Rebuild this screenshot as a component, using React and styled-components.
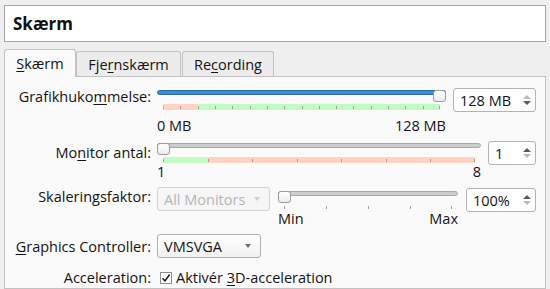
import React from "react";
import styled, { createGlobalStyle } from "styled-components";

const GlobalStyle = createGlobalStyle`
  html, body {
    margin: 0;
    padding: 0;
    background: #efefef;
  }
  body {
    font-family: "Open Sans", "Noto Sans", sans-serif;
    font-size: 14.5px;
    color: #141414;
  }
`;

const Window = styled.div`
  width: 550px;
  height: 289px;
  box-sizing: border-box;
  overflow: hidden;
  padding: 5px 4px 0 4px;
  display: flex;
  flex-direction: column;
  background: #efefef;
`;

const TitleBox = styled.div`
  height: 37px;
  box-sizing: border-box;
  border: 1px solid #a6a6a6;
  background: #ffffff;
  display: flex;
  align-items: center;
  padding-left: 8px;
  font-size: 17px;
  font-weight: 700;
  color: #111;
`;

const TabBar = styled.div`
  margin-top: 7px;
  height: 27px;
  display: flex;
  align-items: flex-end;
  position: relative;
  z-index: 1;
`;

const Tab = styled.div`
  width: ${(p) => p.$w}px;
  height: ${(p) => (p.$active ? 28 : 25)}px;
  margin-bottom: ${(p) => (p.$active ? -1 : 0)}px;
  margin-right: ${(p) => (p.$active ? 0 : 1)}px;
  box-sizing: border-box;
  border: 1px solid #c2c2c2;
  border-bottom: none;
  border-radius: 3px 3px 0 0;
  background: ${(p) => (p.$active ? "#fafafa" : "#ececec")};
  display: flex;
  align-items: center;
  justify-content: center;
  line-height: 17px;
  white-space: nowrap;
`;

const Mn = styled.span`
  text-decoration: underline;
  text-underline-offset: 2px;
  text-decoration-thickness: 1px;
`;

const Panel = styled.div`
  flex: 1;
  border: 1px solid #c2c2c2;
  background: #fafafa;
  padding: 9px 9px 0 10px;
`;

const Row = styled.div`
  display: grid;
  grid-template-columns: 136px 1fr;
  column-gap: 6px;
  margin-top: ${(p) => p.$top || 0}px;
`;

const Label = styled.div`
  text-align: right;
  white-space: nowrap;
  line-height: 17px;
  padding-top: ${(p) => p.$pad || 0}px;
`;

const Content = styled.div`
  display: flex;
  align-items: flex-start;
  gap: ${(p) => p.$gap || 7}px;
`;

const SliderBlock = styled.div`
  flex: 1;
  min-width: 0;
`;

const Track = styled.div`
  position: relative;
  height: 13px;
`;

const Groove = styled.div`
  margin-top: 4px;
  height: 5px;
  box-sizing: border-box;
  border: 1px solid ${(p) => (p.$blue ? "#2b67a6" : "#a9a9a9")};
  border-radius: 3px;
  background: ${(p) => (p.$blue ? "#3d8ad8" : "#cdcdcd")};
`;

const Handle = styled.div`
  position: absolute;
  top: 0;
  width: 13px;
  height: 12px;
  box-sizing: border-box;
  border: 1px solid #9c9c9c;
  border-radius: 3px;
  background: linear-gradient(#ffffff, #ececec);
`;

const Strip = styled.div`
  position: relative;
  display: flex;
  margin: ${(p) => p.$top || 1}px 6px 0;
  height: 6px;
`;

const Segment = styled.div`
  flex: ${(p) => p.$part};
  background: ${(p) => (p.$kind === "red" ? "#ffd3c3" : "#c4fbc4")};
`;

const TickRow = styled.div`
  position: relative;
  margin: ${(p) => p.$top || 0}px 6px 0;
  height: ${(p) => p.$h || 6}px;
`;

const Tick = styled.span`
  position: absolute;
  top: ${(p) => p.$y}px;
  width: 1px;
  height: 3px;
  background: ${(p) => p.$color || "#a2a2a2"};
`;

const ScaleLabels = styled.div`
  display: flex;
  justify-content: space-between;
  line-height: 16px;
  margin-top: ${(p) => p.$top || 0}px;
`;

const SpinBox = styled.div`
  width: ${(p) => p.$w}px;
  height: 24px;
  margin-top: ${(p) => p.$top || 0}px;
  flex-shrink: 0;
  box-sizing: border-box;
  border: 1px solid #b3b3b3;
  border-radius: 3px;
  background: #ffffff;
  display: flex;
  align-items: center;
`;

const SpinValue = styled.div`
  flex: 1;
  padding-left: 6px;
  line-height: 17px;
  white-space: nowrap;
`;

const SpinArrows = styled.div`
  width: 16px;
  height: 100%;
  box-sizing: border-box;
  padding: 6px 0 6px;
  display: flex;
  flex-direction: column;
  justify-content: space-between;
  align-items: center;
`;

const Arrow = styled.span`
  width: 0;
  height: 0;
  border-left: 4px solid transparent;
  border-right: 4px solid transparent;
  ${(p) => (p.$up ? "border-bottom" : "border-top")}: 4px solid
    ${(p) => (p.$off ? "#b9b9b9" : "#5a5a5a")};
`;

const Combo = styled.div`
  width: ${(p) => p.$w}px;
  height: 24px;
  flex-shrink: 0;
  box-sizing: border-box;
  border: 1px solid ${(p) => (p.$disabled ? "#d3d3d3" : "#b0b0b0")};
  border-radius: 3px;
  background: ${(p) =>
    p.$disabled ? "#f6f6f6" : "linear-gradient(#ffffff, #f1f1f1)"};
  color: ${(p) => (p.$disabled ? "#b5b5b5" : "#141414")};
  display: flex;
  align-items: center;
  justify-content: space-between;
  padding: 0 9px 0 6px;
  line-height: 17px;
  white-space: nowrap;
`;

const ComboArrow = styled.span`
  width: 0;
  height: 0;
  border-left: 3.5px solid transparent;
  border-right: 3.5px solid transparent;
  border-top: 4px solid ${(p) => (p.$disabled ? "#cfcfcf" : "#6c6c6c")};
`;

const CheckLine = styled.div`
  display: flex;
  align-items: center;
  gap: 4px;
  line-height: 17px;
  white-space: nowrap;
`;

const CheckBox = styled.span`
  width: 12px;
  height: 12px;
  margin-left: 3px;
  box-sizing: border-box;
  border: 1px solid #8f8f8f;
  background: #ffffff;
  display: flex;
  align-items: center;
  justify-content: center;
`;

function Ticks({ count, y = 1.5, first }) {
  const out = [];
  for (let i = 0; i <= count; i++) {
    out.push(
      <Tick
        key={i}
        $y={y}
        $color={i === 0 && first ? first : undefined}
        style={{ left: `calc(${(i / count) * 100}% - ${i === count ? 1 : 0}px)` }}
      />
    );
  }
  return out;
}

function Slider({ value, blue }) {
  return (
    <Track>
      <Groove $blue={blue} />
      <Handle style={{ left: `calc(${value} * (100% - 13px))` }} />
    </Track>
  );
}

function Spin({ w, top, value, upOff, downOff }) {
  return (
    <SpinBox $w={w} $top={top}>
      <SpinValue>{value}</SpinValue>
      <SpinArrows>
        <Arrow $up $off={upOff} />
        <Arrow $off={downOff} />
      </SpinArrows>
    </SpinBox>
  );
}

export default function App() {
  return (
    <Window>
      <GlobalStyle />
      <TitleBox>Skærm</TitleBox>
      <TabBar>
        <Tab $active $w={72}>
          <span>
            <Mn>S</Mn>kærm
          </span>
        </Tab>
        <Tab $w={105}>
          <span>
            Fje<Mn>r</Mn>nskærm
          </span>
        </Tab>
        <Tab $w={92}>
          <span>
            Re<Mn>c</Mn>ording
          </span>
        </Tab>
      </TabBar>
      <Panel>
        <Row>
          <Label $pad={2}>
            Grafikhuko<Mn>m</Mn>melse:
          </Label>
          <Content>
            <SliderBlock>
              <Slider value={1} blue />
              <Strip>
                <Segment $kind="red" $part={2} />
                <Segment $kind="green" $part={14} />
                <Ticks count={16} first="#e89a90" />
              </Strip>
              <ScaleLabels $top={8}>
                <span>0 MB</span>
                <span>128 MB</span>
              </ScaleLabels>
            </SliderBlock>
            <Spin w={83} top={2} value="128 MB" upOff />
          </Content>
        </Row>

        <Row $top={5}>
          <Label $pad={5}>
            Mo<Mn>n</Mn>itor antal:
          </Label>
          <Content>
            <SliderBlock>
              <Slider value={0} />
              <Strip>
                <Segment $kind="green" $part={1} />
                <Segment $kind="red" $part={6} />
                <Ticks count={7} />
              </Strip>
              <ScaleLabels $top={1}>
                <span>1</span>
                <span>8</span>
              </ScaleLabels>
            </SliderBlock>
            <Spin w={48} top={2} value="1" downOff />
          </Content>
        </Row>

        <Row $top={7}>
          <Label $pad={1}>Skaleringsfaktor:</Label>
          <Content $gap={8}>
            <Combo $w={113} $disabled>
              <span>All Monitors</span>
              <ComboArrow $disabled />
            </Combo>
            <SliderBlock>
              <Slider value={0} />
              <TickRow $top={2} $h={3}>
                <Ticks count={4} y={0} />
              </TickRow>
              <ScaleLabels $top={2}>
                <span>Min</span>
                <span>Max</span>
              </ScaleLabels>
            </SliderBlock>
            <Spin w={70} top={1} value="100%" downOff />
          </Content>
        </Row>

        <Row $top={7}>
          <Label $pad={4}>
            <Mn>G</Mn>raphics Controller:
          </Label>
          <Content>
            <Combo $w={104}>
              <span>VMSVGA</span>
              <ComboArrow />
            </Combo>
          </Content>
        </Row>

        <Row $top={11}>
          <Label>Acceleration:</Label>
          <CheckLine>
            <CheckBox>
              <svg width="10" height="10" viewBox="0 0 10 10">
                <path d="M1.5 5.2 L4 8 L8.6 1.5" fill="none" stroke="#111" strokeWidth="1.4" />
              </svg>
            </CheckBox>
            <span>
              Aktivér <Mn>3</Mn>D-acceleration
            </span>
          </CheckLine>
        </Row>
      </Panel>
    </Window>
  );
}
